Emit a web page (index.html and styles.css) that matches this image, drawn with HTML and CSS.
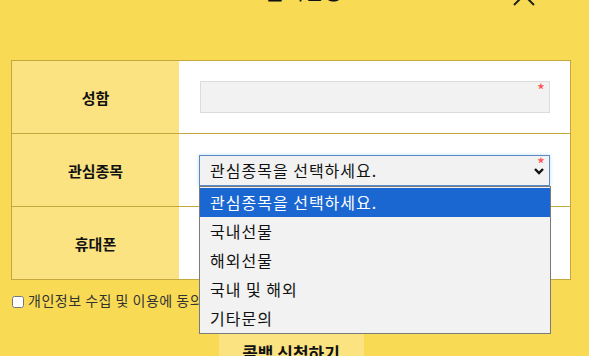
FILE: index.html
```html
<html>

<head>
    <link rel="stylesheet" href="styles.css">
</head>

<body>
<div class="popup">
    <div class="popup-head">
        <h2>콜백신청</h2>
        <span class="close">
            <svg width="22" height="22" viewBox="0 0 22 22"><path d="M1 1 L21 21 M21 1 L1 21" stroke="#222" stroke-width="2" fill="none"/></svg>
        </span>
    </div>
    <form class="callback">
        <div class="table">
            <div class="row">
                <label for="name">성함</label>
                <div class="cell">
                    <div class="field">
                        <input id="name" name="name"/>
                        <span class="req">*</span>
                    </div>
                </div>
            </div>
            <div class="row">
                <label for="item">관심종목</label>
                <div class="cell">
                    <div class="field">
                        <div class="select" id="item">관심종목을 선택하세요.
                            <svg class="chev" width="10" height="7" viewBox="0 0 10 7"><path d="M1 1 L5 5 L9 1" stroke="#111" stroke-width="2.4" fill="none"/></svg>
                        </div>
                        <span class="req">*</span>
                        <ul class="options">
                            <li class="active">관심종목을 선택하세요.</li>
                            <li>국내선물</li>
                            <li>해외선물</li>
                            <li>국내 및 해외</li>
                            <li>기타문의</li>
                        </ul>
                    </div>
                </div>
            </div>
            <div class="row">
                <label for="phone">휴대폰</label>
                <div class="cell"></div>
            </div>
        </div>
        <div class="agree">
            <input type="checkbox" id="agree"/><label for="agree">개인정보 수집 및 이용에 동의합니다.</label>
        </div>
        <div class="submit">
            <button type="button">콜백 신청하기</button>
        </div>
    </form>
</div>
</body>

</html>
```

FILE: styles.css
```css
body {
    margin: 0;
    background: #f9da55;
    font-family: "Noto Sans CJK KR", "Noto Sans", sans-serif;
    overflow: hidden;
}

.popup {
    padding: 0 18px 0 11px;
}

.popup-head {
    display: flex;
    justify-content: space-between;
    align-items: flex-end;
    height: 30px;
    margin-top: -25px;
    padding: 0 36px 0 254px;
}

.popup-head h2 {
    margin: 0;
    font-size: 21px;
    font-weight: normal;
    line-height: 30px;
    color: #111;
}

.close {
    display: block;
    height: 22px;
    margin-bottom: -1px;
}

.callback {
    margin-top: 55px;
}

.table {
    border: 1px solid #c4a83c;
}

.row {
    display: grid;
    grid-template-columns: 167px 1fr;
    height: 72px;
    border-bottom: 1px solid #c4a83c;
}

.row:last-child {
    border-bottom: 0;
}

.row > label {
    display: flex;
    align-items: center;
    justify-content: center;
    background: #fbe382;
    font-size: 15px;
    font-weight: bold;
    color: #111;
}

.cell {
    display: flex;
    align-items: center;
    background: #fff;
    padding-left: 20px;
}

.field {
    position: relative;
    width: 351px;
}

.field input {
    display: block;
    box-sizing: border-box;
    height: 32px;
    margin-left: 1px;
    width: 350px;
    border: 1px solid #dcdcdc;
    background: #f2f2f2;
}

.select {
    display: flex;
    align-items: center;
    justify-content: space-between;
    box-sizing: border-box;
    height: 31px;
    padding: 0 5px 0 10px;
    border: 1px solid #5b8ac4;
    background: #f2f2f2;
    box-shadow: 0 0 4px #bfe0f8;
    font-size: 16px;
    letter-spacing: 1px;
    color: #111;
}

.chev {
    margin-top: 3px;
}

.req {
    position: absolute;
    top: 2px;
    right: 5px;
    color: #ff4f4f;
    font-size: 17px;
    line-height: 14px;
}

.options {
    position: absolute;
    top: 31px;
    left: 0;
    z-index: 5;
    box-sizing: border-box;
    width: 352px;
    height: 148px;
    margin: 0;
    padding: 1px 0 0;
    list-style: none;
    border: 1px solid #7a7a7a;
    background: #f2f2f2;
}

.options li {
    height: 29px;
    line-height: 29px;
    padding-left: 10px;
    font-size: 16px;
    letter-spacing: 1px;
    color: #111;
}

.options li.active {
    background: #1a67d2;
    color: #fff;
}

.agree {
    display: flex;
    align-items: center;
    margin-top: 10px;
    font-size: 14px;
    letter-spacing: 0.5px;
    color: #333;
}

.agree input {
    width: 12px;
    height: 12px;
    margin: 3px 4px 0 1px;
}

.submit {
    display: flex;
    justify-content: center;
    margin-top: 17px;
}

.submit button {
    width: 145px;
    height: 50px;
    border: 0;
    background: #fbe382;
    font-family: inherit;
    font-size: 17px;
    font-weight: bold;
    color: #111;
}
```
